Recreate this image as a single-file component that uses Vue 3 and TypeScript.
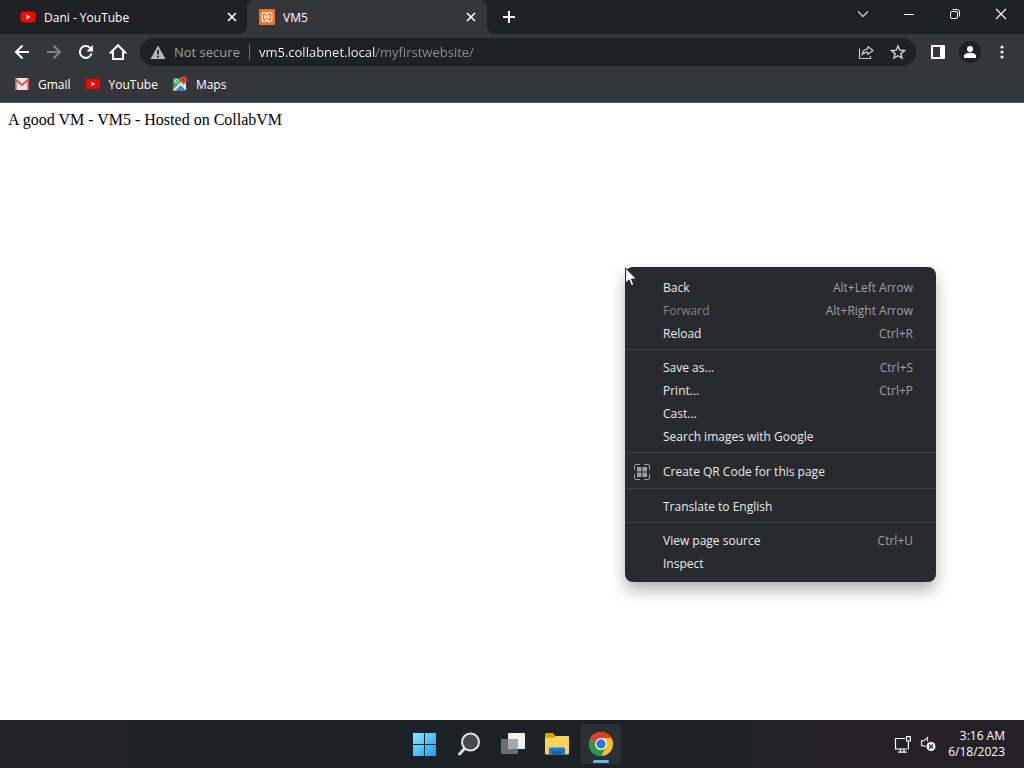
<script setup lang="ts">
import { ref } from 'vue'

interface MenuItem {
  label: string
  shortcut?: string
  disabled?: boolean
  icon?: boolean
}

const address = ref('vm5.collabnet.local/myfirstwebsite/')

const menuGroups: MenuItem[][] = [
  [
    { label: 'Back', shortcut: 'Alt+Left Arrow' },
    { label: 'Forward', shortcut: 'Alt+Right Arrow', disabled: true },
    { label: 'Reload', shortcut: 'Ctrl+R' },
  ],
  [
    { label: 'Save as...', shortcut: 'Ctrl+S' },
    { label: 'Print...', shortcut: 'Ctrl+P' },
    { label: 'Cast...' },
    { label: 'Search images with Google' },
  ],
  [{ label: 'Create QR Code for this page', icon: true }],
  [{ label: 'Translate to English' }],
  [{ label: 'View page source', shortcut: 'Ctrl+U' }, { label: 'Inspect' }],
]
</script>

<template>
  <div class="desktop">
    <header class="browser">
      <div class="tabstrip">
        <div class="tab">
          <svg class="favicon" viewBox="0 0 16 16" aria-hidden="true">
            <rect x="0.5" y="2.5" width="15" height="11" rx="3" fill="#f00" />
            <path d="M6.5 5.6v4.800L10.500 8z" fill="#fff" />
          </svg>
          <span class="tab-title">Dani - YouTube</span>
          <button class="tab-close" aria-label="Close Dani - YouTube">
            <svg width="10" height="10" viewBox="0 0 10 10"><path d="M1 1l8 8M9 1L1 9" stroke="#fff" stroke-width="1.6" /></svg>
          </button>
        </div>
        <div class="tab active">
          <svg class="favicon" viewBox="0 0 16 16" aria-hidden="true">
            <rect width="16" height="16" rx="1" fill="#e8742f" />
            <path d="M5 3.5h1.500L8 5.500l1.500-2H11A1.800 1.800 0 0 1 12.800 5.300v5.400A1.800 1.800 0 0 1 11 12.500H9.500L8 10.500l-1.500 2H5a1.800 1.800 0 0 1-1.800-1.800V5.300A1.800 1.800 0 0 1 5 3.500z" fill="none" stroke="#fde3c8" stroke-width="1.400" />
            <path d="M6 5.800v4.400M10 5.800v4.400M6 8h4" stroke="#fde3c8" stroke-width="1.400" />
          </svg>
          <span class="tab-title">VM5</span>
          <button class="tab-close" aria-label="Close VM5">
            <svg width="10" height="10" viewBox="0 0 10 10"><path d="M1 1l8 8M9 1L1 9" stroke="#fff" stroke-width="1.6" /></svg>
          </button>
        </div>
        <button class="new-tab" aria-label="New tab">
          <svg width="12" height="12" viewBox="0 0 12 12"><path d="M6 0v12M0 6h12" stroke="#fff" stroke-width="2" /></svg>
        </button>
        <div class="window-controls">
          <button aria-label="Search tabs">
            <svg width="12" height="12" viewBox="0 0 12 12"><path d="M1 3.500l5 5 5-5" fill="none" stroke="#ddd" stroke-width="1.1" /></svg>
          </button>
          <button aria-label="Minimize">
            <svg width="12" height="12" viewBox="0 0 12 12"><path d="M1 6.500h10" stroke="#fff" /></svg>
          </button>
          <button aria-label="Restore">
            <svg width="12" height="12" viewBox="0 0 12 12" fill="none" stroke="#fff">
              <rect x="1.5" y="3.5" width="7" height="7" rx="1.5" />
              <path d="M3.500 1.500h4.500a2.500 2.500 0 0 1 2.500 2.500v4.500" />
            </svg>
          </button>
          <button aria-label="Close window">
            <svg width="12" height="12" viewBox="0 0 12 12"><path d="M1 1l10 10M11 1L1 11" stroke="#fff" stroke-width="1.1" /></svg>
          </button>
        </div>
      </div>

      <div class="toolbar">
        <nav class="nav-buttons" aria-label="Navigation">
          <button aria-label="Back">
            <svg width="16" height="16" viewBox="0 0 16 16" fill="none" stroke="#fff" stroke-width="2"><path d="M15 8H2M8.500 1.500L2 8l6.500 6.500" /></svg>
          </button>
          <button aria-label="Forward" disabled>
            <svg width="16" height="16" viewBox="0 0 16 16" fill="none" stroke="#808285" stroke-width="2"><path d="M1 8h13M7.500 1.500L14 8l-6.500 6.500" /></svg>
          </button>
          <button aria-label="Reload">
            <svg width="16" height="16" viewBox="0 0 16 16"><path d="M13.500 9.500A5.900 5.900 0 1 1 12 3.800l1.500 1.500" fill="none" stroke="#fff" stroke-width="2" /><path d="M15 1v6.500H8.500z" fill="#fff" /></svg>
          </button>
          <button aria-label="Home">
            <svg width="18" height="18" viewBox="0 0 18 18"><path d="M1.800 9.500L9 2.200l7.200 7.300H14V16H4V9.500z" fill="none" stroke="#fff" stroke-width="2" /></svg>
          </button>
        </nav>
        <div class="omnibox">
          <button class="security">
            <svg width="16" height="16" viewBox="0 0 16 16" aria-hidden="true">
              <path d="M8 1.500L15.500 15H.5z" fill="#b4b6b9" />
              <path d="M8 6v4.500M8 11.700v1.800" stroke="#202124" stroke-width="1.7" />
            </svg>
            <span>Not secure</span>
          </button>
          <span class="divider"></span>
          <input v-model="address" class="address" type="text" aria-label="Address" spellcheck="false" />
          <button class="omni-action" aria-label="Share">
            <svg width="16" height="16" viewBox="0 0 16 16" fill="none" stroke="#c5c7ca" stroke-width="1.2">
              <path d="M1.500 4.500v10h11V12" />
              <path d="M9.800 2.500L15 6.500l-5.200 4V8.200C7 8.200 5.300 9 4 11c.3-3.700 2.300-5.800 5.800-6.200z" stroke-linejoin="round" />
            </svg>
          </button>
          <button class="omni-action" aria-label="Bookmark this page">
            <svg width="16" height="16" viewBox="0 0 16 16"><path d="M8 2l1.800 4.200 4.600.4-3.500 3 1.100 4.500L8 11.700l-4 2.400 1.100-4.500-3.500-3 4.600-.4z" fill="none" stroke="#d2d4d7" stroke-width="1.4" /></svg>
          </button>
        </div>
        <div class="tool-actions">
          <button aria-label="Side panel">
            <svg width="14" height="14" viewBox="0 0 14 14"><path d="M0 0h14v14H0zM2 2v10h7V2z" fill="#fff" fill-rule="evenodd" /></svg>
          </button>
          <button aria-label="Profile">
            <svg width="22" height="22" viewBox="0 0 22 22"><circle cx="11" cy="11" r="11" fill="#202124" /><circle cx="11" cy="8" r="3" fill="#fff" /><path d="M5 17v-2c0-2 3.500-3.200 6-3.200s6 1.200 6 3.200v2z" fill="#fff" /></svg>
          </button>
          <button aria-label="Menu">
            <svg width="4" height="14" viewBox="0 0 4 14" fill="#eee"><circle cx="2" cy="2" r="1.6" /><circle cx="2" cy="7" r="1.6" /><circle cx="2" cy="12" r="1.6" /></svg>
          </button>
        </div>
      </div>

      <nav class="bookmarks" aria-label="Bookmarks">
        <a href="#gmail">
          <svg width="16" height="16" viewBox="0 0 16 16" aria-hidden="true">
            <rect x="1" y="2" width="14" height="12" rx="1" fill="#e9e6e6" />
            <path d="M3 14V6l5 4 5-4v8z" fill="#f3dedc" />
            <path d="M1.800 14V3.500L8 9l6.200-5.500V14" fill="none" stroke="#d3564e" stroke-width="1.7" />
          </svg>
          <span>Gmail</span>
        </a>
        <a href="#youtube">
          <svg width="16" height="16" viewBox="0 0 16 16" aria-hidden="true">
            <rect x="1" y="3" width="14" height="10" rx="2" fill="#f00" />
            <path d="M6.500 5.800v4.400L10.200 8z" fill="#fff" />
          </svg>
          <span>YouTube</span>
        </a>
        <a href="#maps">
          <svg width="16" height="16" viewBox="0 0 16 16" aria-hidden="true">
            <path d="M1 3a1 1 0 0 1 1-1h8L8.500 7 1 14z" fill="#2ca35a" />
            <path d="M1 13.500L10 4l2 4-8.500 7H2a1 1 0 0 1-1-1.500z" fill="#f5d04c" />
            <path d="M10 7h4v7.500L9 9z" fill="#e8e8e8" />
            <path d="M2.500 15L8.500 9l5.500 6z" fill="#3f7ee8" />
            <path d="M3 13.500l5.500-5.500 5.500 5.500" fill="none" stroke="#f1f1f1" stroke-width="1.4" />
            <circle cx="4.500" cy="5.300" r="1.7" fill="none" stroke="#fff" />
            <path d="M11.700.5A3.300 3.300 0 0 1 15 3.800c0 2.500-2.700 3.200-3.300 6-.6-2.800-3.300-3.500-3.300-6A3.300 3.300 0 0 1 11.700.5z" fill="#e04a3f" />
            <circle cx="11.700" cy="3.800" r="1.2" fill="#8e2420" />
          </svg>
          <span>Maps</span>
        </a>
      </nav>
    </header>

    <main class="page">
      <p>A good VM - VM5 - Hosted on CollabVM</p>
    </main>

    <div class="context-menu" role="menu">
      <div v-for="(group, index) in menuGroups" :key="index" class="menu-group" role="group">
        <button
          v-for="item in group"
          :key="item.label"
          class="menu-item"
          :class="{ tall: item.icon }"
          role="menuitem"
          :disabled="item.disabled"
        >
          <span class="menu-icon">
            <svg v-if="item.icon" width="16" height="16" viewBox="0 0 16 16" aria-hidden="true">
              <path d="M.5 6V2A1.500 1.500 0 0 1 2 .5h4M10 .5h4A1.500 1.500 0 0 1 15.500 2v4M15.500 10v4a1.500 1.500 0 0 1-1.500 1.500h-4M6 15.500H2A1.500 1.500 0 0 1 .5 14v-4" fill="none" stroke="#9aa0a6" />
              <path d="M3 3h4.500v4.500H3zM8.500 3H13v4.500H8.500zM3 8.500h4.500V13H3zM8.500 8.500H13V13H8.500z" fill="#9aa0a6" />
            </svg>
          </span>
          <span class="menu-label">{{ item.label }}</span>
          <span v-if="item.shortcut" class="shortcut">{{ item.shortcut }}</span>
        </button>
      </div>
    </div>

    <svg class="cursor" width="13" height="20" viewBox="0 0 13 20" aria-hidden="true">
      <path d="M.6 1v15.200l3.500-3.300 2.300 5.700 2.500-1-2.400-5.500h5z" fill="#fff" stroke="#111" stroke-width=".9" />
    </svg>

    <footer class="taskbar">
      <div class="apps">
        <button aria-label="Start">
          <svg width="24" height="24" viewBox="0 0 24 24">
            <defs><linearGradient id="start-fill" x2="1" y2="1"><stop stop-color="#8ce4ff" /><stop offset="1" stop-color="#16a1ef" /></linearGradient></defs>
            <path d="M0 1h11v11H0zM12 1h11v11H12zM0 13h11v11H0zM12 13h11v11H12z" fill="url(#start-fill)" />
          </svg>
        </button>
        <button aria-label="Search">
          <svg width="24" height="24" viewBox="0 0 24 24"><path d="M8 16l-5.500 6" stroke="#ddd" stroke-width="3" stroke-linecap="round" /><circle cx="13.500" cy="10" r="8.500" fill="#454a50" stroke="#e6e6e6" stroke-width="2" /></svg>
        </button>
        <button aria-label="Task view">
          <svg width="24" height="24" viewBox="0 0 24 24">
            <rect x="7" y="1" width="17" height="16" rx="1" fill="#f0f0f0" />
            <rect x="0" y="7" width="17" height="15" rx="1" fill="#6b6d6e" />
            <path d="M7 7h10v10H7z" fill="#a7a9aa" />
          </svg>
        </button>
        <button aria-label="File Explorer">
          <svg width="24" height="24" viewBox="0 0 24 24">
            <path d="M0 2.500A1.500 1.500 0 0 1 1.500 1H8l2.500 3H24v6H0z" fill="#dca212" />
            <path d="M0 6h9l2-2h11.500A1.500 1.500 0 0 1 24 5.500V21a1.500 1.500 0 0 1-1.500 1.500h-21A1.500 1.500 0 0 1 0 21z" fill="#fcd354" />
            <path d="M4 22.500V17a1.500 1.500 0 0 1 1.500-1.500h13A1.500 1.500 0 0 1 20 17v5.500z" fill="#177cc9" />
            <path d="M7 22.500V19h10v3.500z" fill="#1061aa" />
          </svg>
        </button>
        <button class="running" aria-label="Google Chrome">
          <svg width="24" height="24" viewBox="0 0 24 24">
            <circle cx="12" cy="12" r="12" fill="#fbc116" />
            <path d="M12 12L6.800 15 1.600 6A12 12 0 0 1 22.400 6H12z" fill="#e33b2e" />
            <path d="M1.600 6l5.200 9a6 6 0 0 0 5.200 3l5.200-3L12 24A12 12 0 0 1 1.600 6z" fill="#229a4c" />
            <circle cx="12" cy="12" r="6" fill="#fff" />
            <circle cx="12" cy="12" r="4.700" fill="#2979ea" />
          </svg>
        </button>
      </div>
      <div class="tray">
        <button class="status" aria-label="Network and volume">
          <svg width="17" height="17" viewBox="0 0 17 17" fill="none" stroke="#fff" stroke-width="1.2">
            <path d="M11 2.500H1.500v10.500H13M4 16.200h9M6.500 13v3M10 13v3" />
            <path d="M12.500.7h3.800V5h-3.800zM14.400 5v8.500" />
          </svg>
          <svg width="16" height="16" viewBox="0 0 16 16">
            <path d="M7.500 5.500V1.500L4 4.700H1.500v5H4l1.500 1.500" fill="none" stroke="#ddd" stroke-width="1.2" />
            <circle cx="11" cy="10.500" r="4.500" fill="#fff" />
            <path d="M9 8.500l4 4M13 8.500l-4 4" stroke="#222" stroke-width="1.2" />
          </svg>
        </button>
        <button class="clock">
          <time>3:16 AM</time>
          <time>6/18/2023</time>
        </button>
      </div>
    </footer>
  </div>
</template>

<style>
body {
  margin: 0;
  background: #fff;
}
</style>

<style scoped>
* {
  box-sizing: border-box;
}

.desktop {
  position: relative;
  display: flex;
  flex-direction: column;
  min-height: 100vh;
  overflow: hidden;
  font-family: "Open Sans", "Noto Sans", sans-serif;
  font-size: 12px;
  color: #fff;
}

button {
  display: flex;
  align-items: center;
  justify-content: center;
  margin: 0;
  padding: 0;
  border: 0;
  background: transparent;
  color: inherit;
  font: inherit;
}

svg {
  display: block;
  flex: none;
}

.browser {
  background: #35363a;
  border-bottom: 1px solid #5c5d60;
}

.tabstrip {
  display: flex;
  height: 34px;
  background: #202124;
}

.tab {
  position: relative;
  display: flex;
  align-items: center;
  flex: 0 1 240px;
  padding: 0 9px 0 12px;
}

.tab:first-child {
  flex-basis: 247px;
  padding: 0 8px 0 20px;
}

.tab.active {
  background: #35363a;
  border-radius: 8px 8px 0 0;
}

.tab.active::before,
.tab.active::after {
  content: "";
  position: absolute;
  bottom: 0;
  width: 8px;
  height: 8px;
}

.tab.active::before {
  right: 100%;
  background: radial-gradient(circle at 0 0, transparent 8px, #35363a 8px);
}

.tab.active::after {
  left: 100%;
  background: radial-gradient(circle at 100% 0, transparent 8px, #35363a 8px);
}

.favicon {
  width: 16px;
  height: 16px;
}

.tab-title {
  flex: 1;
  margin-left: 8px;
  white-space: nowrap;
}

.tab-close {
  width: 14px;
  height: 16px;
}

.new-tab {
  width: 44px;
}

.window-controls {
  display: flex;
  height: 28px;
  margin-left: auto;
}

.window-controls button {
  width: 46px;
}

.toolbar {
  display: flex;
  align-items: center;
  height: 36px;
}

.nav-buttons {
  display: flex;
  padding: 0 6px;
}

.nav-buttons button {
  width: 32px;
  height: 28px;
}

.omnibox {
  display: flex;
  align-items: center;
  flex: 1;
  height: 28px;
  padding: 0 2px 0 10px;
  border-radius: 14px;
  background: #202124;
  font-size: 13px;
}

.security {
  gap: 8px;
  color: #9aa0a6;
}

.divider {
  width: 1px;
  height: 16px;
  margin: 0 9px;
  background: #6b6d70;
}

/* The host name is bright and the path after it is dimmed. */
.address {
  flex: 1;
  min-width: 0;
  padding: 0;
  border: 0;
  outline: 0;
  font: inherit;
  color: transparent;
  background: linear-gradient(to right, #fff 117px, #8b8e92 117px);
  background-clip: text;
  -webkit-background-clip: text;
  caret-color: #fff;
}

.omni-action {
  width: 32px;
  height: 28px;
}

.tool-actions {
  display: flex;
  padding: 0 6px;
}

.tool-actions button {
  width: 32px;
  height: 28px;
}

.bookmarks {
  display: flex;
  align-items: center;
  gap: 14px;
  height: 32px;
  padding: 0 14px 4px;
}

.bookmarks a {
  display: flex;
  align-items: center;
  gap: 8px;
  color: inherit;
  text-decoration: none;
}

.page {
  flex: 1;
  padding: 8px;
  background: #fff;
  color: #000;
  font-family: "Liberation Serif", serif;
  font-size: 16px;
}

.page p {
  margin: 0;
}

.context-menu {
  position: absolute;
  top: 267px;
  left: 625px;
  width: 311px;
  padding: 9px 0 7px;
  border-radius: 8px;
  background: #292a2d;
  box-shadow: 0 8px 16px rgba(0, 0, 0, 0.3);
}

.menu-group + .menu-group {
  margin-top: 4px;
  padding-top: 6px;
  border-top: 1px solid #3f4145;
}

.menu-item {
  justify-content: flex-start;
  width: 100%;
  height: 23px;
  padding: 0 23px 0 9px;
  color: #e8eaed;
}

.menu-item.tall {
  height: 25px;
}

.menu-icon {
  width: 29px;
}

.menu-item:disabled {
  color: #808387;
}

.shortcut {
  margin-left: auto;
  color: #9aa0a6;
}

.cursor {
  position: absolute;
  top: 267px;
  left: 625px;
}

.taskbar {
  display: grid;
  grid-template-columns: 1fr auto 1fr;
  height: 48px;
  background: linear-gradient(to right, #242226, #1b2228 40%, #1b2228 60%, #242226 80%);
}

.apps {
  grid-column: 2;
  display: flex;
  align-items: center;
  gap: 4px;
  padding-left: 2px;
}

.apps button {
  width: 40px;
  height: 40px;
  border-radius: 4px;
}

.apps .running {
  position: relative;
  background: #2b3035;
}

.running::after {
  content: "";
  position: absolute;
  bottom: 1px;
  left: 12px;
  width: 16px;
  height: 3px;
  border-radius: 2px;
  background: #6ab5ef;
}

.tray {
  display: flex;
  justify-content: flex-end;
  gap: 12px;
  padding-right: 19px;
}

.status {
  gap: 9px;
}

.clock {
  flex-direction: column;
  align-items: flex-end;
  line-height: 16px;
}
</style>
